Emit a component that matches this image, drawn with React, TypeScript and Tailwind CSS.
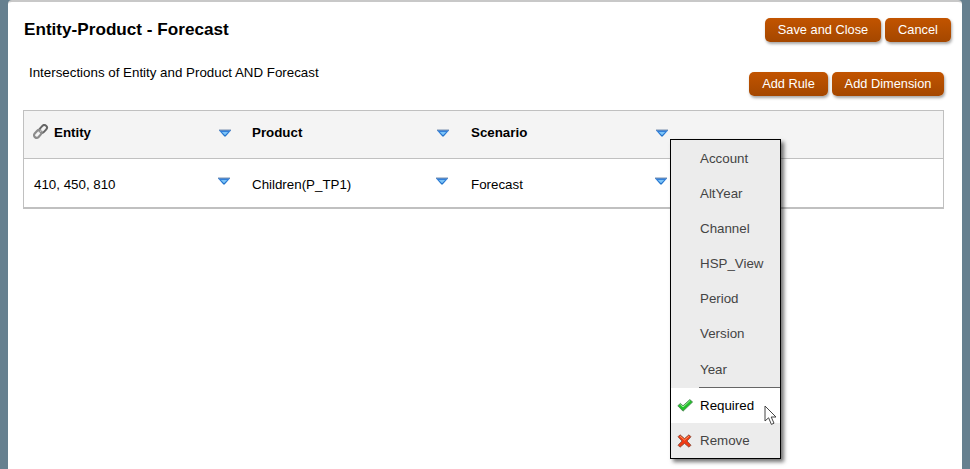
const font = "font-['Liberation_Sans',Arial,sans-serif]"

function OrangeButton({ label, className }: { label: string; className: string }) {
  return (
    <button
      type="button"
      className={`flex h-6 items-center justify-center rounded-[5px] bg-[linear-gradient(#c25400,#a44700)] text-[12.8px] text-white shadow-[1px_2px_3px_rgba(0,0,0,0.35)] ${className}`}
    >
      {label}
    </button>
  )
}

function DownArrow() {
  return (
    <svg width="12" height="8" viewBox="0 0 12 8" className="shrink-0">
      <defs>
        <linearGradient id="arrow" x1="0" y1="0" x2="0" y2="1">
          <stop offset="0" stopColor="#7d93b0" />
          <stop offset="0.3" stopColor="#2f7fdc" />
          <stop offset="1" stopColor="#1f6fc4" />
        </linearGradient>
      </defs>
      <path d="M0 0.5 H12 V1.5 L6.6 7.5 H5.4 L0 1.5 Z" fill="url(#arrow)" />
      <path d="M2.8 3 H9.2 L6 6.2 Z" fill="#7cc4f8" />
    </svg>
  )
}

function ChainIcon() {
  return (
    <svg width="16" height="16" viewBox="0 0 16 16" className="-ml-[1px] shrink-0" fill="none">
      <rect x="7.6" y="0.6" width="5.2" height="8.6" rx="2.6" transform="rotate(42 10.2 4.9)" stroke="#666" strokeWidth="2" />
      <rect x="2.2" y="5.6" width="5.2" height="8.6" rx="2.6" transform="rotate(42 4.8 9.9)" stroke="#8c8c8c" strokeWidth="2.2" />
      <path d="M6 8.8 L9 5.8" stroke="#c4c4c4" strokeWidth="1.2" />
    </svg>
  )
}

function CheckIcon() {
  return (
    <svg width="16" height="13" viewBox="0 0 16 13">
      <path d="M0.8 6.8 L3.4 4.4 L6 6.8 L12.8 0.6 L15.6 3 L6 12.2 Z" fill="#22c02a" stroke="#4f7f55" strokeWidth="0.8" />
      <path d="M3.4 5.6 L6 8 L13 1.6" fill="none" stroke="#9cf09c" strokeWidth="1" />
    </svg>
  )
}

function CrossIcon() {
  return (
    <svg width="15" height="14" viewBox="0 0 15 14">
      <path
        d="M1 2.8 L3 0.8 L7.5 4.6 L12 0.8 L14 2.8 L10 7 L14 11.2 L12 13.2 L7.5 9.4 L3 13.2 L1 11.2 L5 7 Z"
        fill="#f03a14"
        stroke="#7f4a3a"
        strokeWidth="0.8"
      />
      <path d="M3 2.2 L7.5 6 L12 2.2" fill="none" stroke="#ff9a60" strokeWidth="0.9" />
    </svg>
  )
}

const menuItems = ["Account", "AltYear", "Channel", "HSP_View", "Period", "Version"]

function DimensionMenu() {
  return (
    <div className="absolute left-[662px] top-[137px] w-[111px] border border-black bg-[#ececec] text-[13.33px] text-[#444] shadow-[3px_3px_4px_rgba(0,0,0,0.55)]">
      <ul className="pt-[1px]">
        {menuItems.map((item) => (
          <li key={item} className="flex h-[35px] items-center pl-[29px]">
            {item}
          </li>
        ))}
        <li className="flex h-[36px] items-center pl-[29px] pt-[2px]">Year</li>
      </ul>
      <div className="ml-[28px] h-px bg-[#666]" />
      <div className="flex h-[35px] items-center gap-[7px] bg-white pl-[6px] text-black">
        <CheckIcon />
        Required
      </div>
      <div className="flex h-[35px] items-center gap-[8px] pl-[6px]">
        <CrossIcon />
        Remove
      </div>
    </div>
  )
}

function Cell({ children, first }: { children: React.ReactNode; first?: boolean }) {
  return (
    <div className={`flex items-center justify-between pl-[10px] ${first ? "pr-[11px]" : "pr-[12px]"}`}>{children}</div>
  )
}

function RowArrow() {
  return (
    <span className="-mt-[5px] mr-[1px]">
      <DownArrow />
    </span>
  )
}

export default function App() {
  return (
    <div className={`h-[469px] w-[970px] overflow-hidden bg-[#66808f] pl-[8px] pr-[8px] ${font}`}>
      <div className="relative h-full rounded-tl-[4px] rounded-tr-[4px] border-t-2 border-[#c8c8c8] bg-white">
        <div className="flex items-start justify-between pl-[16px] pr-[11px] pt-[16px]">
          <h1 className="pt-[1px] text-[17.15px] font-bold leading-[20px] text-black">Entity-Product - Forecast</h1>
          <div className="flex gap-[4px]">
            <OrangeButton label="Save and Close" className="w-[116px]" />
            <OrangeButton label="Cancel" className="w-[66px]" />
          </div>
        </div>

        <div className="flex items-start justify-between pl-[21px] pr-[18px] pt-[22px]">
          <p className="text-[13.33px] leading-[18px] text-black">Intersections of Entity and Product AND Forecast</p>
          <div className="mt-[8px] flex gap-[4px]">
            <OrangeButton label="Add Rule" className="w-[79px]" />
            <OrangeButton label="Add Dimension" className="w-[112px]" />
          </div>
        </div>

        <div className="ml-[15px] mr-[18px] mt-[14px] h-[99px] border border-b-2 border-[#c0c0c0] text-[13.33px] text-black">
          <div className="grid h-[48px] grid-cols-[218px_219px_219px] border-b border-[#c0c0c0] bg-[#f4f4f4] pb-[4px] font-bold">
            <Cell first>
              <span className="flex items-center gap-[5px]">
                <ChainIcon />
                Entity
              </span>
              <DownArrow />
            </Cell>
            <Cell>
              Product
              <DownArrow />
            </Cell>
            <Cell>
              Scenario
              <DownArrow />
            </Cell>
          </div>
          <div className="grid h-[48px] grid-cols-[218px_219px_219px]">
            <Cell first>
              <span className="pt-[4px]">410, 450, 810</span>
              <RowArrow />
            </Cell>
            <Cell>
              <span className="pt-[4px]">Children(P_TP1)</span>
              <RowArrow />
            </Cell>
            <Cell>
              <span className="pt-[4px]">Forecast</span>
              <RowArrow />
            </Cell>
          </div>
        </div>

        <DimensionMenu />

        <svg width="15" height="21" viewBox="0 0 15 21" className="absolute left-[756px] top-[403px]">
          <path d="M1 1 V16 L4.6 12.8 L7.4 19.4 L10 18.2 L7.2 12 H12 Z" fill="#fff" stroke="#444" strokeWidth="1" />
        </svg>
      </div>
    </div>
  )
}
